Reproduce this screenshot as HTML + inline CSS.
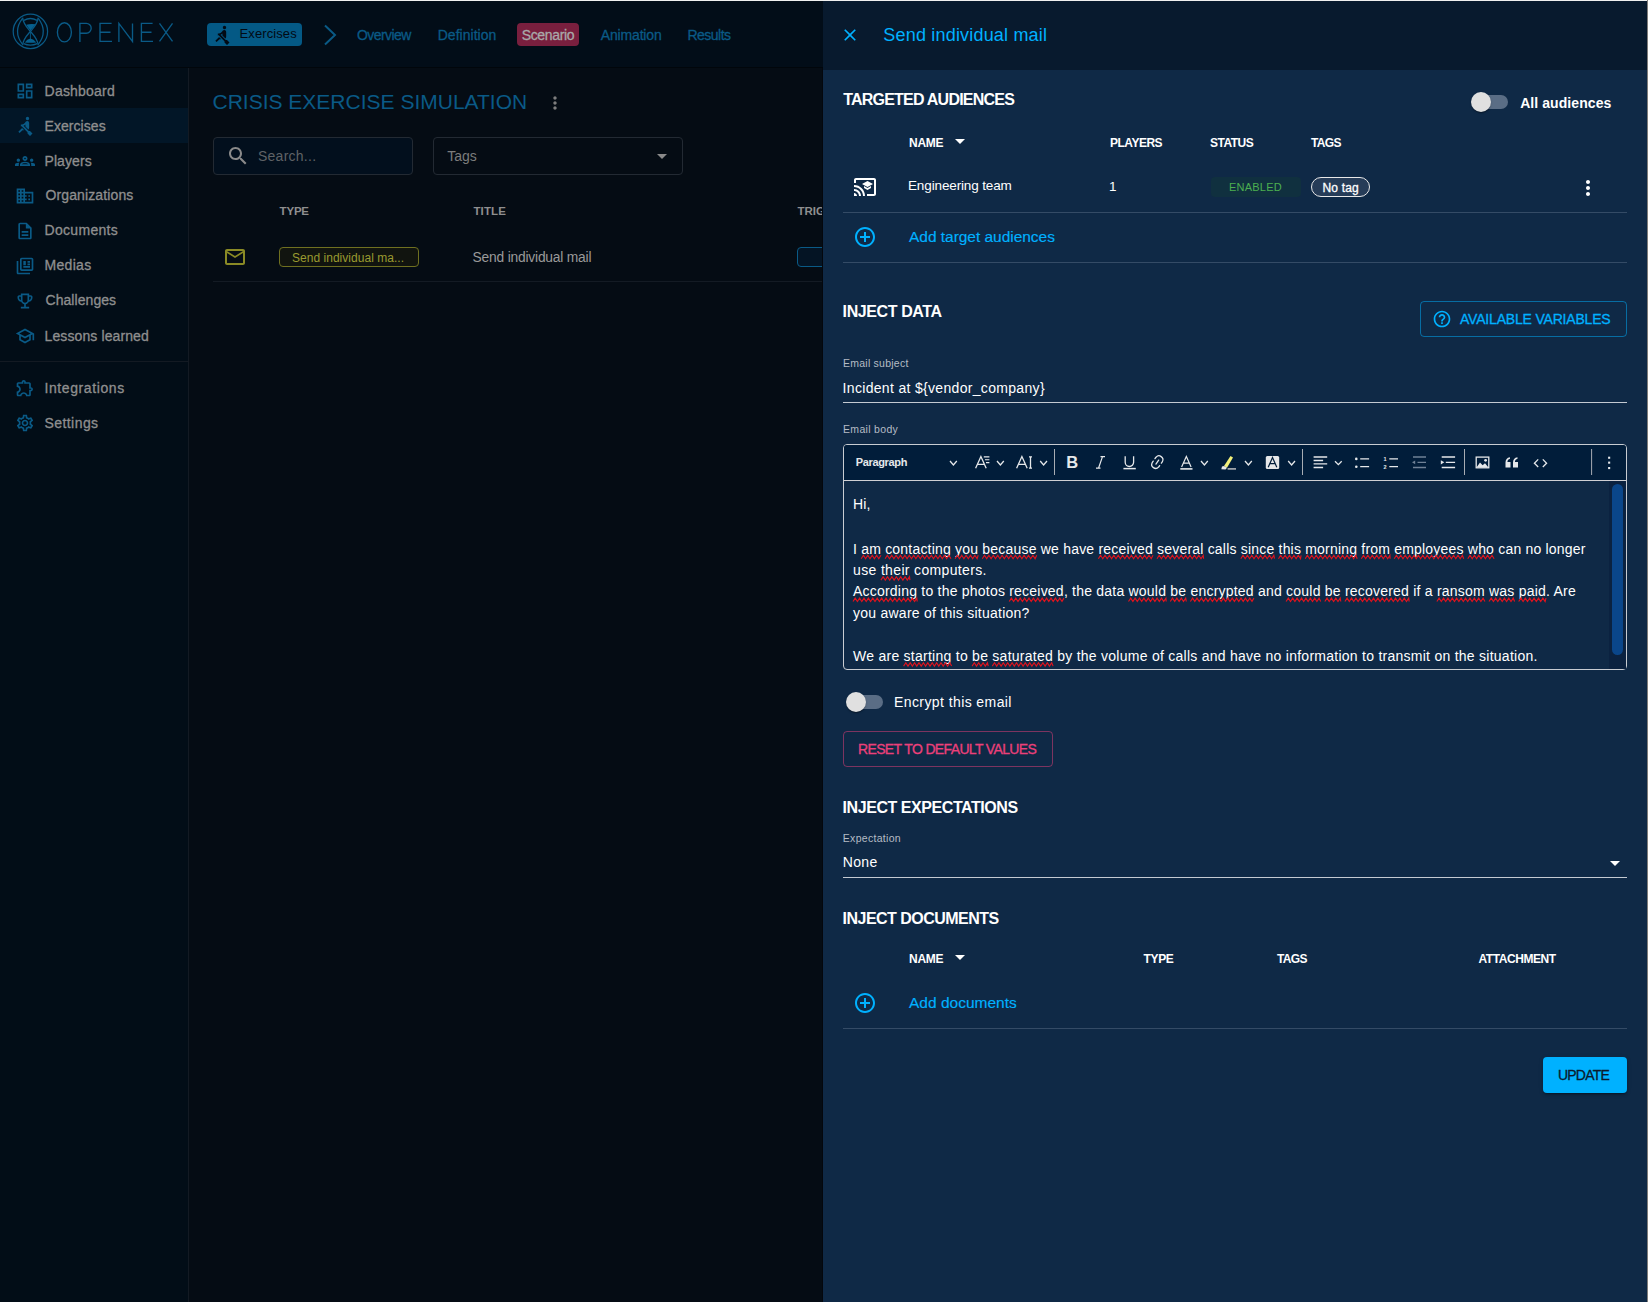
<!DOCTYPE html>
<html><head><meta charset="utf-8">
<style>
*{box-sizing:border-box;margin:0;padding:0}
html,body{width:1648px;height:1302px;overflow:hidden;background:#050c14;font-family:"Liberation Sans",sans-serif}
.a{position:absolute;white-space:nowrap}
.ed{font-size:14px;line-height:14px;color:#fff;letter-spacing:0.2px}
.sq{}
</style></head><body>
<div class="a" style="left:0px;top:0px;width:1648px;height:67px;background:#020d18"></div>
<div class="a" style="left:0px;top:67px;width:823px;height:1px;background:#01060b"></div>
<div class="a" style="left:0px;top:68px;width:188px;height:1234px;background:#020d17"></div>
<div class="a" style="left:188px;top:68px;width:1px;height:1234px;background:#131a23"></div>
<div class="a" style="left:189px;top:68px;width:634px;height:1234px;background:#050c14"></div>
<svg class="a" style="left:8px;top:8px" width="170" height="46" viewBox="0 0 170 46" fill="none" stroke="#0a5a86" stroke-width="1.25">
<circle cx="22.4" cy="23.4" r="17.2"/>
<path d="M14.5 10.4 Q4.5 23.4 14.5 36.4"/><path d="M30.3 10.4 Q40.3 23.4 30.3 36.4"/>
<path d="M14.6 9.6 C15.2 16 19.5 20 22.4 23.4 C25.3 26.8 29.6 30.8 30.2 37.2"/>
<path d="M30.2 9.6 C29.6 16 25.3 20 22.4 23.4 C19.5 26.8 15.2 30.8 14.6 37.2"/>
<path d="M15.9 12.4 Q22.4 8.6 29.0 12.4"/>
<path d="M15.6 35.6 Q22.4 38.6 29.2 35.6"/>
<path d="M18.2 16.8 Q22.4 15.4 27.6 16.2 L22.4 22.4 Z" fill="#06608f" stroke="none"/>
<path d="M22.4 24 V31" stroke-width="0.9"/>
<path d="M16.8 34.4 Q19 31 22.4 30.6 Q25.8 31 28.3 34.4 Q22.4 35.2 16.8 34.4 Z" fill="#06608f" stroke="none"/>
<g stroke-width="1.35" transform="translate(0 7)">
<ellipse cx="56.4" cy="17.3" rx="7.0" ry="9.6"/>
<path d="M71.9 27.1 V8.4 H78.3 A4.9 4.9 0 0 1 78.3 18.2 H71.9"/>
<path d="M103.6 8.4 H92 V26.4 H104 M92 17.2 H102.5"/>
<path d="M110.9 27.1 V8.4 L124.5 26.4 V8.4"/>
<path d="M144.6 8.4 H133.4 V26.4 H145 M133.4 17.2 H143.5"/>
<path d="M151.5 8.4 L164.5 26.4 M164.5 8.4 L151.5 26.4"/>
</g>
</svg>
<div class="a" style="left:207px;top:23px;width:95px;height:23px;border-radius:4px;background:#045985"></div>
<svg class="a" style="left:212px;top:25px" width="20" height="20" viewBox="0 0 24 24" fill="#020a14"><path d="M8.5 14.5 4 19l1.5 1.5L9 17h2l-2.5-2.5zM15 1c-1.1 0-2 .9-2 2s.9 2 2 2 2-.9 2-2-.9-2-2-2zm6 20.01L18 24l-2.99-3.01V19.5l-7.1-7.09c-.31.05-.61.07-.91.07v-2.160c1.66.03 3.61-.87 4.67-2.04l1.4-1.55c.19-.21.43-.38.69-.5.29-.14.62-.23.96-.23h.03C15.99 6.01 17 7.02 17 8.26v5.75c0 .84-.35 1.61-.92 2.16l-3.58-3.58v-2.27c-.63.52-1.43 1.02-2.29 1.39L16.5 18H18l3 3.01z"/></svg>
<div class="a" style="left:239.6px;top:27px;font-size:13px;line-height:13px;color:#020a14;letter-spacing:0.09px;">Exercises</div>
<svg class="a" style="left:322px;top:24px" width="16" height="22" viewBox="0 0 16 22" fill="none" stroke="#0a5a86" stroke-width="2"><path d="M3 1.5 L13 11 L3 20.5"/></svg>
<div class="a" style="left:357px;top:28.0px;font-size:14px;line-height:14px;color:#0a5a86;letter-spacing:-0.57px;-webkit-text-stroke:0.3px currentColor;">Overview</div>
<div class="a" style="left:437.7px;top:28.0px;font-size:14px;line-height:14px;color:#0a5a86;letter-spacing:0.03px;-webkit-text-stroke:0.3px currentColor;">Definition</div>
<div class="a" style="left:517px;top:23px;width:62px;height:23px;border-radius:4px;background:#791f3e"></div>
<div class="a" style="left:521.7px;top:28.0px;font-size:14px;line-height:14px;color:#a9a9a9;letter-spacing:-0.34px;-webkit-text-stroke:0.3px currentColor;">Scenario</div>
<div class="a" style="left:600.8px;top:28.0px;font-size:14px;line-height:14px;color:#0a5a86;letter-spacing:-0.17px;-webkit-text-stroke:0.3px currentColor;">Animation</div>
<div class="a" style="left:687.4px;top:28.0px;font-size:14px;line-height:14px;color:#0a5a86;letter-spacing:-0.5px;-webkit-text-stroke:0.3px currentColor;">Results</div>
<div class="a" style="left:0px;top:108px;width:188px;height:35px;background:#021627"></div>
<svg class="a" style="left:15px;top:81px" width="20" height="20" viewBox="0 0 24 24" fill="#0a5a86"><path d="M19 5v2h-4V5h4M9 5v6H5V5h4m10 8v6h-4v-6h4M9 17v2H5v-2h4M21 3h-8v6h8V3zM11 3H3v10h8V3zm10 8h-8v10h8V11zm-10 4H3v6h8v-6z"/></svg>
<div class="a" style="left:44.6px;top:84.2px;font-size:14px;line-height:14px;color:#8f8f8f;letter-spacing:0.21px;-webkit-text-stroke:0.3px currentColor;">Dashboard</div>
<svg class="a" style="left:15px;top:116px" width="20" height="20" viewBox="0 0 24 24" fill="#0a5a86"><path d="M8.5 14.5 4 19l1.5 1.5L9 17h2l-2.5-2.5zM15 1c-1.1 0-2 .9-2 2s.9 2 2 2 2-.9 2-2-.9-2-2-2zm6 20.01L18 24l-2.99-3.01V19.5l-7.1-7.09c-.31.05-.61.07-.91.07v-2.160c1.66.03 3.61-.87 4.67-2.04l1.4-1.55c.19-.21.43-.38.69-.5.29-.14.62-.23.96-.23h.03C15.99 6.01 17 7.02 17 8.26v5.75c0 .84-.35 1.61-.92 2.16l-3.58-3.58v-2.27c-.63.52-1.43 1.02-2.29 1.39L16.5 18H18l3 3.01z"/></svg>
<div class="a" style="left:44.5px;top:118.5px;font-size:14px;line-height:14px;color:#8f8f8f;letter-spacing:0.06px;-webkit-text-stroke:0.3px currentColor;">Exercises</div>
<svg class="a" style="left:15px;top:151px" width="20" height="20" viewBox="0 0 24 24" fill="#0a5a86"><path d="M4 13c1.1 0 2-.9 2-2s-.9-2-2-2-2 .9-2 2 .9 2 2 2zm1.13 1.1c-.37-.06-.74-.1-1.13-.1-.99 0-1.93.21-2.78.58C.48 14.9 0 15.62 0 16.43V18h4.5v-1.61c0-.83.23-1.61.63-2.29zM20 13c1.1 0 2-.9 2-2s-.9-2-2-2-2 .9-2 2 .9 2 2 2zm4 3.43c0-.81-.48-1.53-1.22-1.85-.85-.37-1.79-.58-2.78-.58-.39 0-.76.04-1.13.1.4.68.63 1.46.63 2.29V18H24v-1.57zm-7.76-2.78c-1.17-.52-2.61-.9-4.24-.9-1.63 0-3.07.39-4.24.9C6.68 14.13 6 15.21 6 16.39V18h12v-1.61c0-1.18-.68-2.26-1.76-2.74zM8.07 16c.09-.23.13-.39.91-.69.97-.38 1.99-.56 3.02-.56s2.05.18 3.02.56c.77.3.81.46.91.69H8.07zM12 8c.55 0 1 .45 1 1s-.45 1-1 1-1-.45-1-1 .45-1 1-1m0-2c-1.66 0-3 1.34-3 3s1.34 3 3 3 3-1.34 3-3-1.34-3-3-3z"/></svg>
<div class="a" style="left:44.5px;top:153.5px;font-size:14px;line-height:14px;color:#8f8f8f;letter-spacing:0.08px;-webkit-text-stroke:0.3px currentColor;">Players</div>
<svg class="a" style="left:15px;top:186px" width="20" height="20" viewBox="0 0 24 24" fill="#0a5a86"><path d="M12 7V3H2v18h20V7H12zM6 19H4v-2h2v2zm0-4H4v-2h2v2zm0-4H4V9h2v2zm0-4H4V5h2v2zm4 12H8v-2h2v2zm0-4H8v-2h2v2zm0-4H8V9h2v2zm0-4H8V5h2v2zm10 12h-8v-2h2v-2h-2v-2h2v-2h-2V9h8v10zm-2-8h-2v2h2v-2zm0 4h-2v2h2v-2z"/></svg>
<div class="a" style="left:45.5px;top:188.0px;font-size:14px;line-height:14px;color:#8f8f8f;letter-spacing:0.12px;-webkit-text-stroke:0.3px currentColor;">Organizations</div>
<svg class="a" style="left:15px;top:221px" width="20" height="20" viewBox="0 0 24 24" fill="#0a5a86"><path d="M8 16h8v2H8zm0-4h8v2H8zm6-10H6c-1.1 0-2 .9-2 2v16c0 1.1.89 2 1.99 2H18c1.1 0 2-.9 2-2V8l-6-6zm4 18H6V4h7v5h5v11z"/></svg>
<div class="a" style="left:44.5px;top:222.5px;font-size:14px;line-height:14px;color:#8f8f8f;letter-spacing:0.31px;-webkit-text-stroke:0.3px currentColor;">Documents</div>
<svg class="a" style="left:15px;top:256px" width="20" height="20" viewBox="0 0 24 24" fill="#0a5a86"><path d="M4 6H2v14c0 1.1.9 2 2 2h14v-2H4V6zm16-4H8c-1.1 0-2 .9-2 2v12c0 1.1.9 2 2 2h12c1.1 0 2-.9 2-2V4c0-1.1-.9-2-2-2zm0 14H8V4h12v12zM10 6h3v5h-3zm5 0h3v2h-3zm0 3h3v2h-3zm-5 3h8v2h-8z"/></svg>
<div class="a" style="left:44.5px;top:258.0px;font-size:14px;line-height:14px;color:#8f8f8f;letter-spacing:0.3px;-webkit-text-stroke:0.3px currentColor;">Medias</div>
<svg class="a" style="left:15px;top:291px" width="20" height="20" viewBox="0 0 24 24" fill="#0a5a86"><path d="M19 5h-2V3H7v2H5c-1.1 0-2 .9-2 2v1c0 2.55 1.92 4.63 4.39 4.94.63 1.5 1.98 2.63 3.61 2.96V19H7v2h10v-2h-4v-3.1c1.63-.33 2.98-1.46 3.61-2.96C19.08 12.63 21 10.55 21 8V7c0-1.1-.9-2-2-2zM5 8V7h2v3.82C5.84 10.4 5 9.3 5 8zm7 6c-1.65 0-3-1.35-3-3V5h6v6c0 1.65-1.35 3-3 3zm7-6c0 1.3-.84 2.4-2 2.82V7h2v1z"/></svg>
<div class="a" style="left:45.5px;top:293.0px;font-size:14px;line-height:14px;color:#8f8f8f;letter-spacing:0.06px;-webkit-text-stroke:0.3px currentColor;">Challenges</div>
<svg class="a" style="left:15px;top:326px" width="20" height="20" viewBox="0 0 24 24" fill="#0a5a86"><path d="M12 3 1 9l4 2.18v6L12 21l7-3.82v-6l2-1.09V17h2V9L12 3zm6.82 6L12 12.72 5.18 9 12 5.28 18.82 9zM17 15.99l-5 2.73-5-2.73v-3.72L12 15l5-2.73v3.72z"/></svg>
<div class="a" style="left:44.5px;top:328.5px;font-size:14px;line-height:14px;color:#8f8f8f;letter-spacing:0.11px;-webkit-text-stroke:0.3px currentColor;">Lessons learned</div>
<svg class="a" style="left:15px;top:378px" width="20" height="20" viewBox="0 0 24 24" fill="#0a5a86"><path d="M10.5 4.5c.28 0 .5.22.5.5v2h6v6h2c.28 0 .5.22.5.5s-.22.5-.5.5h-2v6h-2.12c-.68-1.75-2.39-3-4.38-3s-3.7 1.25-4.38 3H4v-2.12c1.75-.68 3-2.39 3-4.38 0-1.99-1.24-3.7-2.99-4.38L4 7h6V5c0-.28.22-.5.5-.5m0-2C9.12 2.5 8 3.62 8 5H4c-1.1 0-1.99.9-1.99 2v3.8h.29c1.49 0 2.7 1.21 2.7 2.7s-1.21 2.7-2.7 2.7H2V20c0 1.1.9 2 2 2h3.8v-.3c0-1.49 1.21-2.7 2.7-2.7s2.7 1.21 2.7 2.7v.3H17c1.1 0 2-.9 2-2v-4c1.38 0 2.5-1.12 2.5-2.5S20.38 11 19 11V7c0-1.1-.9-2-2-2h-4c0-1.38-1.12-2.5-2.5-2.5z"/></svg>
<div class="a" style="left:44.5px;top:381.0px;font-size:14px;line-height:14px;color:#8f8f8f;letter-spacing:0.59px;-webkit-text-stroke:0.3px currentColor;">Integrations</div>
<svg class="a" style="left:15px;top:413px" width="20" height="20" viewBox="0 0 24 24" fill="#0a5a86"><path d="M19.43 12.98c.04-.32.07-.64.07-.98 0-.34-.03-.66-.07-.98l2.11-1.65c.19-.15.24-.42.12-.64l-2-3.46c-.09-.16-.26-.25-.44-.25-.06 0-.12.01-.17.03l-2.49 1c-.52-.4-1.08-.73-1.69-.98l-.38-2.65C14.46 2.18 14.25 2 14 2h-4c-.25 0-.46.18-.49.42l-.38 2.65c-.61.25-1.17.59-1.69.98l-2.49-1c-.06-.02-.12-.03-.18-.03-.17 0-.34.09-.43.25l-2 3.46c-.13.22-.07.49.12.64l2.11 1.65c-.04.32-.07.65-.07.98 0 .33.03.66.07.98l-2.11 1.65c-.19.15-.24.42-.12.64l2 3.46c.09.16.26.25.44.25.06 0 .12-.01.17-.03l2.49-1c.52.4 1.08.73 1.69.98l.38 2.65c.03.24.24.42.49.42h4c.25 0 .46-.18.49-.42l.38-2.65c.61-.25 1.17-.59 1.69-.98l2.49 1c.06.02.12.03.18.03.17 0 .34-.09.43-.25l2-3.46c.12-.22.07-.49-.12-.64l-2.11-1.65zm-1.98-1.71c.04.31.05.52.05.73 0 .21-.02.43-.05.73l-.14 1.13.89.7 1.08.84-.7 1.21-1.27-.51-1.04-.42-.9.68c-.43.32-.84.56-1.25.73l-1.06.43-.16 1.13-.2 1.35h-1.4l-.19-1.35-.16-1.13-1.06-.43c-.43-.18-.83-.41-1.23-.71l-.91-.7-1.06.43-1.27.51-.7-1.21 1.08-.84.89-.7-.14-1.13c-.03-.31-.05-.54-.05-.74s.02-.43.05-.73l.14-1.13-.89-.7-1.08-.84.7-1.21 1.27.51 1.04.42.9-.68c.43-.32.84-.56 1.25-.73l1.06-.43.16-1.13.2-1.35h1.39l.19 1.35.16 1.13 1.06.43c.43.18.83.41 1.23.71l.91.7 1.06-.43 1.27-.51.7 1.21-1.07.85-.89.7.14 1.13zM12 8c-2.21 0-4 1.79-4 4s1.79 4 4 4 4-1.79 4-4-1.79-4-4-4zm0 6c-1.1 0-2-.9-2-2s.9-2 2-2 2 .9 2 2-.9 2-2 2z"/></svg>
<div class="a" style="left:44.5px;top:416.0px;font-size:14px;line-height:14px;color:#8f8f8f;letter-spacing:0.43px;-webkit-text-stroke:0.3px currentColor;">Settings</div>
<div class="a" style="left:0px;top:361px;width:188px;height:1px;background:#131a23"></div>
<div class="a" style="left:212.5px;top:91px;font-size:21px;line-height:21px;color:#0a5a86;">CRISIS EXERCISE SIMULATION</div>
<svg class="a" style="left:545px;top:93px" width="20" height="20" viewBox="0 0 24 24" fill="#7d7d7d"><path d="M12 8c1.1 0 2-.9 2-2s-.9-2-2-2-2 .9-2 2 .9 2 2 2zm0 2c-1.1 0-2 .9-2 2s.9 2 2 2 2-.9 2-2-.9-2-2-2zm0 6c-1.1 0-2 .9-2 2s.9 2 2 2 2-.9 2-2-.9-2-2-2z"/></svg>
<div class="a" style="left:213px;top:137px;width:200px;height:38px;border:1px solid #232a33;border-radius:4px;background:#020f1d"></div>
<svg class="a" style="left:226px;top:144px" width="24" height="24" viewBox="0 0 24 24" fill="#8a8a8a"><path d="M15.5 14h-.79l-.28-.27C15.41 12.59 16 11.11 16 9.5 16 5.91 13.09 3 9.5 3S3 5.91 3 9.5 5.91 16 9.5 16c1.61 0 3.09-.59 4.23-1.57l.27.28v.79l5 4.99L20.49 19l-4.99-5zm-6 0C7.01 14 5 11.99 5 9.5S7.01 5 9.5 5 14 7.01 14 9.5 11.99 14 9.5 14z"/></svg>
<div class="a" style="left:258px;top:149.2px;font-size:14px;line-height:14px;color:#5f6266;letter-spacing:0.25px;">Search...</div>
<div class="a" style="left:433px;top:137px;width:250px;height:38px;border:1px solid #232a33;border-radius:4px"></div>
<div class="a" style="left:447.3px;top:148.5px;font-size:14px;line-height:14px;color:#7c7c7c;">Tags</div>
<svg class="a" style="left:650px;top:144px" width="24" height="24" viewBox="0 0 24 24" fill="#8a8a8a"><path d="M7 10l5 5 5-5z"/></svg>
<div class="a" style="left:279.6px;top:206.2px;font-size:11.5px;line-height:11.5px;color:#8f8f8f;font-weight:700;letter-spacing:-0.2px;">TYPE</div>
<div class="a" style="left:473.4px;top:206.2px;font-size:11.5px;line-height:11.5px;color:#8f8f8f;font-weight:700;letter-spacing:0.15px;">TITLE</div>
<div class="a" style="left:797.5px;top:206.2px;font-size:11.5px;line-height:11.5px;color:#8f8f8f;font-weight:700;">TRIGGER</div>
<svg class="a" style="left:223px;top:245px" width="24" height="24" viewBox="0 0 24 24" fill="#8a8a25"><path d="M22 6c0-1.1-.9-2-2-2H4c-1.1 0-2 .9-2 2v12c0 1.1.9 2 2 2h16c1.1 0 2-.9 2-2V6zm-2 0-8 5-8-5h16zm0 12H4V8l8 5 8-5v10z"/></svg>
<div class="a" style="left:279px;top:247px;width:140px;height:20px;border:1px solid #6f7020;border-radius:4px;background:#11140f"></div>
<div class="a" style="left:292px;top:251.5px;font-size:12px;line-height:12px;color:#9a9a30;letter-spacing:0.03px;">Send individual ma...</div>
<div class="a" style="left:472.6px;top:250.8px;font-size:13.8px;line-height:13.8px;color:#9a9a9a;letter-spacing:-0.2px;">Send individual mail</div>
<div class="a" style="left:797px;top:247px;width:60px;height:20px;border:1px solid #0a5a86;border-radius:4px;background:#041424"></div>
<div class="a" style="left:213px;top:281px;width:610px;height:1px;background:#141b24"></div>
<div class="a" style="left:822px;top:68px;width:1px;height:1234px;background:#04070d"></div>
<div class="a" style="left:823px;top:0px;width:825px;height:1302px;background:#0f2946"></div>
<div class="a" style="left:823px;top:0px;width:825px;height:70px;background:#081a2e"></div>
<svg class="a" style="left:840px;top:25px" width="20" height="20" viewBox="0 0 24 24" fill="#00b1ff"><path d="M19 6.41 17.59 5 12 10.59 6.41 5 5 6.41 10.59 12 5 17.59 6.41 19 12 13.41 17.59 19 19 17.59 13.41 12z"/></svg>
<div class="a" style="left:883.3px;top:25.7px;font-size:18px;line-height:18px;color:#00b1ff;letter-spacing:0.19px;">Send individual mail</div>
<div class="a" style="left:843.2px;top:92.3px;font-size:16px;line-height:16px;color:#fff;font-weight:700;letter-spacing:-0.78px;">TARGETED AUDIENCES</div>
<div class="a" style="left:1474px;top:95px;width:34px;height:14px;border-radius:7px;background:#5a6d85"></div>
<div class="a" style="left:1471px;top:92px;width:20px;height:20px;border-radius:10px;background:#e0e0e0;box-shadow:0 2px 1px -1px rgba(0,0,0,.2),0 1px 1px 0 rgba(0,0,0,.14),0 1px 3px 0 rgba(0,0,0,.12)"></div>
<div class="a" style="left:1520.2px;top:95.7px;font-size:14px;line-height:14px;color:#fff;font-weight:700;letter-spacing:0.07px;">All audiences</div>
<div class="a" style="left:909.1px;top:137.2px;font-size:12px;line-height:12px;color:#fff;font-weight:700;letter-spacing:-0.33px;">NAME</div>
<svg class="a" style="left:948px;top:129px" width="24" height="24" viewBox="0 0 24 24" fill="#fff"><path d="M7 10l5 5 5-5z"/></svg>
<div class="a" style="left:1110px;top:137.2px;font-size:12px;line-height:12px;color:#fff;font-weight:700;letter-spacing:-0.5px;">PLAYERS</div>
<div class="a" style="left:1210px;top:137.2px;font-size:12px;line-height:12px;color:#fff;font-weight:700;letter-spacing:-0.5px;">STATUS</div>
<div class="a" style="left:1311px;top:137.2px;font-size:12px;line-height:12px;color:#fff;font-weight:700;letter-spacing:-0.67px;">TAGS</div>
<svg class="a" style="left:853px;top:175px" width="24" height="24" viewBox="0 0 24 24" fill="#fff"><path d="M21 3H3c-1.1 0-2 .9-2 2v3h2V5h18v14h-7v2h7c1.1 0 2-.9 2-2V5c0-1.1-.9-2-2-2zM1 18v3h3c0-1.66-1.34-3-3-3zm0-4v2c2.76 0 5 2.24 5 5h2c0-3.87-3.13-7-7-7zm0-4v2c4.97 0 9 4.03 9 9h2c0-6.08-4.93-11-11-11zm10 1.09v2L14.5 15l3.5-1.91v-2L14.5 13 11 11.09zM14.5 6 9 9l5.5 3L20 9l-5.5-3z"/></svg>
<div class="a" style="left:908px;top:178.5px;font-size:13.5px;line-height:13.5px;color:#fff;letter-spacing:-0.13px;">Engineering team</div>
<div class="a" style="left:1109px;top:179.5px;font-size:13.5px;line-height:13.5px;color:#fff;">1</div>
<div class="a" style="left:1211px;top:177px;width:90px;height:20px;border-radius:4px;background:#10303f"></div>
<div class="a" style="left:1229px;top:182.1px;font-size:11px;line-height:11px;color:#4caf50;letter-spacing:0.23px;">ENABLED</div>
<div class="a" style="left:1311px;top:177px;width:59px;height:20px;border-radius:10px;border:1px solid #e8e8e8;background:#263c58"></div>
<div class="a" style="left:1322.4px;top:182px;font-size:12px;line-height:12px;color:#fff;letter-spacing:0.2px;-webkit-text-stroke:0.3px currentColor;">No tag</div>
<svg class="a" style="left:1576px;top:176px" width="24" height="24" viewBox="0 0 24 24" fill="#fff"><path d="M12 8c1.1 0 2-.9 2-2s-.9-2-2-2-2 .9-2 2 .9 2 2 2zm0 2c-1.1 0-2 .9-2 2s.9 2 2 2 2-.9 2-2-.9-2-2-2zm0 6c-1.1 0-2 .9-2 2s.9 2 2 2 2-.9 2-2-.9-2-2-2z"/></svg>
<div class="a" style="left:843px;top:212px;width:784px;height:1px;background:#344b66"></div>
<svg class="a" style="left:853px;top:225px" width="24" height="24" viewBox="0 0 24 24" fill="#00b1ff"><path d="M13 7h-2v4H7v2h4v4h2v-4h4v-2h-4V7zm-1-5C6.48 2 2 6.48 2 12s4.48 10 10 10 10-4.48 10-10S17.52 2 12 2zm0 18c-4.41 0-8-3.59-8-8s3.59-8 8-8 8 3.59 8 8-3.59 8-8 8z"/></svg>
<div class="a" style="left:909px;top:228.5px;font-size:15.5px;line-height:15.5px;color:#00b1ff;letter-spacing:-0.03px;-webkit-text-stroke:0.15px currentColor;">Add target audiences</div>
<div class="a" style="left:843px;top:262px;width:784px;height:1px;background:#344b66"></div>
<div class="a" style="left:842.6px;top:304px;font-size:16px;line-height:16px;color:#fff;font-weight:700;letter-spacing:-0.4px;">INJECT DATA</div>
<div class="a" style="left:1420px;top:301px;width:207px;height:36px;border-radius:4px;border:1px solid rgba(0,177,255,0.5)"></div>
<svg class="a" style="left:1432px;top:309px" width="20" height="20" viewBox="0 0 24 24" fill="#00b1ff"><path d="M11 18h2v-2h-2v2zm1-16C6.48 2 2 6.48 2 12s4.48 10 10 10 10-4.48 10-10S17.52 2 12 2zm0 18c-4.41 0-8-3.59-8-8s3.59-8 8-8 8 3.59 8 8-3.59 8-8 8zm0-14c-2.21 0-4 1.79-4 4h2c0-1.1.9-2 2-2s2 .9 2 2c0 2-3 1.75-3 5h2c0-2.25 3-2.5 3-5 0-2.21-1.79-4-4-4z"/></svg>
<div class="a" style="left:1460px;top:312px;font-size:14px;line-height:14px;color:#00b1ff;letter-spacing:-0.19px;-webkit-text-stroke:0.3px currentColor;">AVAILABLE VARIABLES</div>
<div class="a" style="left:843px;top:357.9px;font-size:10.5px;line-height:10.5px;color:#b5bcc5;letter-spacing:0.24px;">Email subject</div>
<div class="a" style="left:842.6px;top:380.8px;font-size:14px;line-height:14px;color:#fff;letter-spacing:0.32px;">Incident at ${vendor_company}</div>
<div class="a" style="left:843px;top:402px;width:784px;height:1px;background:#c4cad2"></div>
<div class="a" style="left:843px;top:424.3px;font-size:10.5px;line-height:10.5px;color:#b5bcc5;letter-spacing:0.32px;">Email body</div>
<div class="a" style="left:843px;top:444px;width:784px;height:226px;border:1px solid #c8ccd2;border-radius:4px;overflow:hidden;background:#0f2946"><div style="position:absolute;left:0;top:0;width:782px;height:36px;background:#011d3a;border-bottom:1px solid #d0d0d4"></div></div>
<div class="a" style="left:855.7px;top:456.6px;font-size:11px;line-height:11px;color:#e6e8ea;font-weight:700;letter-spacing:-0.34px;">Paragraph</div>
<svg class="a" style="left:843px;top:444px" width="784" height="37" viewBox="843 444 784 37"><path d="M950 461 L953.40 465 L956.8 461" fill="none" stroke="#e6e8ea" stroke-width="1.3"/><path d="M975.6 468.3 L980.9 456.6 L986.2 468.3 M977.4 464.3 H984.4" fill="none" stroke="#e6e8ea" stroke-width="1.3"/><path d="M983.8 456.9 H989.4 M985 459.8 H989.4 M986 462.6 H989.4" fill="none" stroke="#e6e8ea" stroke-width="1.1"/><path d="M997 461 L1000.40 465 L1003.8 461" fill="none" stroke="#e6e8ea" stroke-width="1.3"/><path d="M1016.6 468.3 L1021.9 456.6 L1027.2 468.3 M1018.4 464.3 H1025.4" fill="none" stroke="#e6e8ea" stroke-width="1.3"/><path d="M1030.5 457 V468 M1029 456.8 H1032 M1029 468.2 H1032" fill="none" stroke="#e6e8ea" stroke-width="1.3"/><path d="M1040.2 461 L1043.60 465 L1047 461" fill="none" stroke="#e6e8ea" stroke-width="1.3"/><path d="M1054.5 449 V475" stroke="#a8adb4" stroke-width="1"/><text x="1066.2" y="468.3" font-family="Liberation Sans" font-weight="700" font-size="16.5" fill="#e6e8ea">B</text><path d="M1098.5 468.2 L1102.5 456.6 M1096 468.2 H1100.5 M1100.5 456.6 H1105" fill="none" stroke="#e6e8ea" stroke-width="1.2"/><path d="M1125.2 456.3 V462.3 A4.2 4.2 0 0 0 1133.6 462.3 V456.3" fill="none" stroke="#e6e8ea" stroke-width="1.3"/><path d="M1123.4 468.6 H1135.8" stroke="#e6e8ea" stroke-width="1.5"/><g transform="translate(1148.6 453.4) scale(0.87)" fill="#e6e8ea"><path d="m11.077 15 .991-1.416a.75.75 0 1 1 1.229.86l-1.148 1.64a.748.748 0 0 1-.217.206 5.251 5.251 0 0 1-8.503-5.955.741.741 0 0 1 .12-.274l1.147-1.639a.75.75 0 1 1 1.228.86L4.933 10.7l.006.003a3.75 3.75 0 0 0 6.132 4.294l.006.004zm5.494-5.335a.748.748 0 0 1-.12.274l-1.147 1.639a.75.75 0 1 1-1.228-.86l.86-1.23a3.75 3.75 0 0 0-6.144-4.301l-.86 1.229a.75.75 0 0 1-1.229-.86l1.148-1.64a.748.748 0 0 1 .217-.206 5.251 5.251 0 0 1 8.503 5.955zm-4.563-2.532a.75.75 0 0 1 .184 1.045l-3.155 4.505a.75.75 0 1 1-1.229-.86l3.155-4.506a.75.75 0 0 1 1.045-.184z"/></g><path d="M1181.6 467 L1186.35 456.4 L1191.1 467 M1183.3 463.2 H1189.4" fill="none" stroke="#e6e8ea" stroke-width="1.2"/><path d="M1180.3 468.9 H1192.5" stroke="#e6e8ea" stroke-width="1.6"/><path d="M1201 461 L1204.40 465 L1207.8 461" fill="none" stroke="#e6e8ea" stroke-width="1.3"/><path d="M1224 466 L1230.5 456 L1233 457.6 L1227 467.8 Z" fill="#f2f07a"/><path d="M1222 466.5 L1224 466 L1227 467.8 L1225.5 469.5 L1221.3 469.3 Z" fill="#e8e8e8"/><path d="M1227.6 468.9 H1236" stroke="#b0b4b8" stroke-width="1.6"/><path d="M1245 461 L1248.40 465 L1251.8 461" fill="none" stroke="#e6e8ea" stroke-width="1.3"/><rect x="1265.8" y="455.9" width="13.4" height="13.2" rx="1.5" fill="#e6e8ea"/><path d="M1268.2 467.3 L1272.5 457.6 L1276.8 467.3 M1269.7 463.6 H1275.3" fill="none" stroke="#011d3a" stroke-width="1.2"/><path d="M1288.2 461 L1291.60 465 L1295 461" fill="none" stroke="#e6e8ea" stroke-width="1.3"/><path d="M1302.5 449 V475" stroke="#a8adb4" stroke-width="1"/><path d="M1313.6 457 H1327.2 M1313.6 460.5 H1323.1 M1313.6 463.9 H1327.2 M1313.6 467.5 H1323.1" stroke="#e6e8ea" stroke-width="1.3"/><path d="M1335 461.2 L1338.35 464.6 L1341.7 461.2" fill="none" stroke="#e6e8ea" stroke-width="1.3"/><circle cx="1356.3" cy="458.9" r="1.3" fill="#e6e8ea"/><circle cx="1356.3" cy="466.7" r="1.3" fill="#e6e8ea"/><path d="M1360.2 458.9 H1369.1 M1360.2 466.7 H1369.1" stroke="#e6e8ea" stroke-width="1.3"/><text x="1383.6" y="461" font-family="Liberation Sans" font-weight="700" font-size="5.5" fill="#e6e8ea">1</text><text x="1383.4" y="469.2" font-family="Liberation Sans" font-weight="700" font-size="5.5" fill="#e6e8ea">2</text><path d="M1389.3 458.9 H1398 M1389.3 466.7 H1398" stroke="#e6e8ea" stroke-width="1.3"/><path d="M1413 457 H1426 M1417.5 462.3 H1426 M1413 467.5 H1426" stroke="#6f8196" stroke-width="1.3"/><path d="M1415.2 460.4 L1412 462.3 L1415.2 464.2 Z" fill="#6f8196"/><path d="M1441.7 457 H1455.1 M1445.8 462.3 H1455.1 M1441.7 467.5 H1455.1" stroke="#e6e8ea" stroke-width="1.3"/><path d="M1440.8 460.2 L1444.3 462.3 L1440.8 464.4 Z" fill="#e6e8ea"/><path d="M1464.5 449 V475" stroke="#a8adb4" stroke-width="1"/><rect x="1476.2" y="457.1" width="12.6" height="10.7" fill="none" stroke="#e6e8ea" stroke-width="1.3"/><path d="M1476.5 467.5 L1480 462.6 L1482.6 465.2 L1485 463.2 L1488.5 467.5 Z" fill="#e6e8ea"/><circle cx="1485.6" cy="460.3" r="1.4" fill="#e6e8ea"/><path d="M1505.5 462.5 C1505.5 459.5 1507 457.6 1510 457.2 L1510 458.8 C1508.5 459.2 1507.5 460.3 1507.4 462 L1510.5 462 L1510.5 467.5 L1505.5 467.5 Z" fill="#e6e8ea"/><path d="M1513 462.5 C1513 459.5 1514.5 457.6 1517.5 457.2 L1517.5 458.8 C1516 459.2 1515 460.3 1514.9 462 L1518 462 L1518 467.5 L1513 467.5 Z" fill="#e6e8ea"/><path d="M1538.2 459.4 L1534.4 463.2 L1538.2 467 M1542.8 459.4 L1546.6 463.2 L1542.8 467" fill="none" stroke="#e6e8ea" stroke-width="1.3"/><path d="M1591.6 449 V475" stroke="#a8adb4" stroke-width="1"/><rect x="1608.1" y="456.7" width="2.1" height="2.1" fill="#e6e8ea"/><rect x="1608.1" y="461.6" width="2.1" height="2.1" fill="#e6e8ea"/><rect x="1608.1" y="467" width="2.1" height="2.1" fill="#e6e8ea"/></svg>
<div class="a" style="left:1609px;top:481px;width:17px;height:188px;background:#0b2240"></div>
<div class="a" style="left:1612px;top:484px;width:11px;height:171px;border-radius:6px;background:#0a468a"></div>
<div class="a ed" style="left:853px;top:497.3px;letter-spacing:0.2px">Hi,</div>
<div class="a ed" style="left:853px;top:541.5px;letter-spacing:0.2px">I <span class="sq">am</span> <span class="sq">contacting</span> <span class="sq">you</span> <span class="sq">because</span> we have <span class="sq">received</span> <span class="sq">several</span> calls <span class="sq">since</span> <span class="sq">this</span> <span class="sq">morning</span> <span class="sq">from</span> <span class="sq">employees</span> <span class="sq">who</span> can no longer</div>
<div class="a ed" style="left:853px;top:562.9px;letter-spacing:0.35px">use <span class="sq">their</span> computers.</div>
<div class="a ed" style="left:853px;top:584.3px;letter-spacing:0.217px"><span class="sq">According</span> to the photos <span class="sq">received</span>, the data <span class="sq">would</span> <span class="sq">be</span> <span class="sq">encrypted</span> and <span class="sq">could</span> <span class="sq">be</span> <span class="sq">recovered</span> if a <span class="sq">ransom</span> <span class="sq">was</span> <span class="sq">paid</span>. Are</div>
<div class="a ed" style="left:853px;top:605.8px;letter-spacing:0.25px">you aware of this situation?</div>
<div class="a ed" style="left:853px;top:648.9px;letter-spacing:0.26px">We are <span class="sq">starting</span> to <span class="sq">be</span> <span class="sq">saturated</span> by the volume of calls and have no information to transmit on the situation.</div>
<div class="a" style="left:849px;top:695px;width:34px;height:14px;border-radius:7px;background:#5a6d85"></div>
<div class="a" style="left:846px;top:692px;width:20px;height:20px;border-radius:10px;background:#e0e0e0;box-shadow:0 2px 1px -1px rgba(0,0,0,.2),0 1px 1px 0 rgba(0,0,0,.14),0 1px 3px 0 rgba(0,0,0,.12)"></div>
<div class="a" style="left:894px;top:695px;font-size:14px;line-height:14px;color:#fff;letter-spacing:0.41px;">Encrypt this email</div>
<div class="a" style="left:843px;top:731px;width:210px;height:36px;border-radius:4px;border:1px solid rgba(236,64,122,0.5)"></div>
<div class="a" style="left:858px;top:741.8px;font-size:14px;line-height:14px;color:#ec407a;letter-spacing:-0.64px;-webkit-text-stroke:0.3px currentColor;">RESET TO DEFAULT VALUES</div>
<div class="a" style="left:842.6px;top:799.5px;font-size:16px;line-height:16px;color:#fff;font-weight:700;letter-spacing:-0.44px;">INJECT EXPECTATIONS</div>
<div class="a" style="left:842.8px;top:833px;font-size:10.5px;line-height:10.5px;color:#b5bcc5;letter-spacing:0.3px;">Expectation</div>
<div class="a" style="left:842.7px;top:855px;font-size:14px;line-height:14px;color:#fff;letter-spacing:0.35px;">None</div>
<div class="a" style="left:843px;top:877px;width:784px;height:1px;background:#c4cad2"></div>
<svg class="a" style="left:1603px;top:851px" width="24" height="24" viewBox="0 0 24 24" fill="#fff"><path d="M7 10l5 5 5-5z"/></svg>
<div class="a" style="left:842.6px;top:911px;font-size:16px;line-height:16px;color:#fff;font-weight:700;letter-spacing:-0.53px;">INJECT DOCUMENTS</div>
<div class="a" style="left:909.1px;top:953.3px;font-size:12px;line-height:12px;color:#fff;font-weight:700;letter-spacing:-0.33px;">NAME</div>
<svg class="a" style="left:948px;top:945px" width="24" height="24" viewBox="0 0 24 24" fill="#fff"><path d="M7 10l5 5 5-5z"/></svg>
<div class="a" style="left:1143.5px;top:953.3px;font-size:12px;line-height:12px;color:#fff;font-weight:700;letter-spacing:-0.33px;">TYPE</div>
<div class="a" style="left:1277px;top:953.3px;font-size:12px;line-height:12px;color:#fff;font-weight:700;letter-spacing:-0.67px;">TAGS</div>
<div class="a" style="left:1478.5px;top:953.3px;font-size:12px;line-height:12px;color:#fff;font-weight:700;letter-spacing:-0.44px;">ATTACHMENT</div>
<svg class="a" style="left:853px;top:991px" width="24" height="24" viewBox="0 0 24 24" fill="#00b1ff"><path d="M13 7h-2v4H7v2h4v4h2v-4h4v-2h-4V7zm-1-5C6.48 2 2 6.48 2 12s4.48 10 10 10 10-4.48 10-10S17.52 2 12 2zm0 18c-4.41 0-8-3.59-8-8s3.59-8 8-8 8 3.59 8 8-3.59 8-8 8z"/></svg>
<div class="a" style="left:909px;top:995px;font-size:15.5px;line-height:15.5px;color:#00b1ff;-webkit-text-stroke:0.15px currentColor;">Add documents</div>
<div class="a" style="left:843px;top:1028px;width:784px;height:1px;background:#344b66"></div>
<div class="a" style="left:1543px;top:1057px;width:84px;height:36px;border-radius:4px;background:#00b1ff;box-shadow:0 3px 1px -2px rgba(0,0,0,.2),0 2px 2px 0 rgba(0,0,0,.14),0 1px 5px 0 rgba(0,0,0,.12)"></div>
<div class="a" style="left:1558px;top:1067.5px;font-size:14px;line-height:14px;color:#0b1a2c;letter-spacing:-0.8px;-webkit-text-stroke:0.3px currentColor;">UPDATE</div>
<div class="a" style="left:0px;top:0px;width:1648px;height:1px;background:#f0f0f0"></div>
<div class="a" style="left:1647px;top:0px;width:1px;height:1302px;background:#807d7a"></div>
<svg class="a" style="left:0;top:0" width="1648" height="1302" viewBox="0 0 1648 1302"><path d="M861.2,558.7 L863.4,555.3 L865.6,558.7 L867.8,555.3 L870.0,558.7 L872.2,555.3 L874.4,558.7 L876.6,555.3 L878.8,558.7 L881.0,555.3 M885.1,558.7 L887.3,555.3 L889.5,558.7 L891.7,555.3 L893.9,558.7 L896.1,555.3 L898.3,558.7 L900.5,555.3 L902.7,558.7 L904.9,555.3 L907.1,558.7 L909.3,555.3 L911.5,558.7 L913.7,555.3 L915.9,558.7 L918.1,555.3 L920.3,558.7 L922.5,555.3 L924.7,558.7 L926.9,555.3 L929.1,558.7 L931.3,555.3 L933.5,558.7 L935.7,555.3 L937.9,558.7 L940.1,555.3 L942.3,558.7 L944.5,555.3 L946.7,558.7 L948.9,555.3 L951.0,558.7 M955.1,558.7 L957.3,555.3 L959.5,558.7 L961.7,555.3 L963.9,558.7 L966.1,555.3 L968.3,558.7 L970.5,555.3 L972.7,558.7 L974.9,555.3 L977.1,558.7 L978.2,555.3 M982.3,558.7 L984.5,555.3 L986.7,558.7 L988.9,555.3 L991.1,558.7 L993.3,555.3 L995.5,558.7 L997.7,555.3 L999.9,558.7 L1002.1,555.3 L1004.3,558.7 L1006.5,555.3 L1008.7,558.7 L1010.9,555.3 L1013.1,558.7 L1015.3,555.3 L1017.5,558.7 L1019.7,555.3 L1021.9,558.7 L1024.1,555.3 L1026.3,558.7 L1028.5,555.3 L1030.7,558.7 L1032.9,555.3 L1035.1,558.7 L1036.7,555.3 M1098.4,558.7 L1100.6,555.3 L1102.8,558.7 L1105.0,555.3 L1107.2,558.7 L1109.4,555.3 L1111.6,558.7 L1113.8,555.3 L1116.0,558.7 L1118.2,555.3 L1120.4,558.7 L1122.6,555.3 L1124.8,558.7 L1127.0,555.3 L1129.2,558.7 L1131.4,555.3 L1133.6,558.7 L1135.8,555.3 L1138.0,558.7 L1140.2,555.3 L1142.4,558.7 L1144.6,555.3 L1146.8,558.7 L1149.0,555.3 L1151.2,558.7 L1153.0,555.3 M1157.0,558.7 L1159.2,555.3 L1161.4,558.7 L1163.6,555.3 L1165.8,558.7 L1168.0,555.3 L1170.2,558.7 L1172.4,555.3 L1174.6,558.7 L1176.8,555.3 L1179.0,558.7 L1181.2,555.3 L1183.4,558.7 L1185.6,555.3 L1187.8,558.7 L1190.0,555.3 L1192.2,558.7 L1194.4,555.3 L1196.6,558.7 L1198.8,555.3 L1201.0,558.7 L1203.2,555.3 L1203.6,558.7 M1240.8,558.7 L1243.0,555.3 L1245.2,558.7 L1247.4,555.3 L1249.6,558.7 L1251.8,555.3 L1254.0,558.7 L1256.2,555.3 L1258.4,558.7 L1260.6,555.3 L1262.8,558.7 L1265.0,555.3 L1267.2,558.7 L1269.4,555.3 L1271.6,558.7 L1273.8,555.3 L1274.5,558.7 M1278.5,558.7 L1280.7,555.3 L1282.9,558.7 L1285.1,555.3 L1287.3,558.7 L1289.5,555.3 L1291.7,558.7 L1293.9,555.3 L1296.1,558.7 L1298.3,555.3 L1300.5,558.7 L1301.1,555.3 M1305.2,558.7 L1307.4,555.3 L1309.6,558.7 L1311.8,555.3 L1314.0,558.7 L1316.2,555.3 L1318.4,558.7 L1320.6,555.3 L1322.8,558.7 L1325.0,555.3 L1327.2,558.7 L1329.4,555.3 L1331.6,558.7 L1333.8,555.3 L1336.0,558.7 L1338.2,555.3 L1340.4,558.7 L1342.6,555.3 L1344.8,558.7 L1347.0,555.3 L1349.2,558.7 L1351.4,555.3 L1353.6,558.7 L1355.8,555.3 L1357.2,558.7 M1361.3,558.7 L1363.5,555.3 L1365.7,558.7 L1367.9,555.3 L1370.1,558.7 L1372.3,555.3 L1374.5,558.7 L1376.7,555.3 L1378.9,558.7 L1381.1,555.3 L1383.3,558.7 L1385.5,555.3 L1387.7,558.7 L1389.9,555.3 L1390.1,558.7 M1394.2,558.7 L1396.4,555.3 L1398.6,558.7 L1400.8,555.3 L1403.0,558.7 L1405.2,555.3 L1407.4,558.7 L1409.6,555.3 L1411.8,558.7 L1414.0,555.3 L1416.2,558.7 L1418.4,555.3 L1420.6,558.7 L1422.8,555.3 L1425.0,558.7 L1427.2,555.3 L1429.4,558.7 L1431.6,555.3 L1433.8,558.7 L1436.0,555.3 L1438.2,558.7 L1440.4,555.3 L1442.6,558.7 L1444.8,555.3 L1447.0,558.7 L1449.2,555.3 L1451.4,558.7 L1453.6,555.3 L1455.8,558.7 L1458.0,555.3 L1460.2,558.7 L1462.4,555.3 L1463.7,558.7 M1467.8,558.7 L1470.0,555.3 L1472.2,558.7 L1474.4,555.3 L1476.6,558.7 L1478.8,555.3 L1481.0,558.7 L1483.2,555.3 L1485.4,558.7 L1487.6,555.3 L1489.8,558.7 L1492.0,555.3 L1494.1,558.7 M880.9,580.1 L883.1,576.7 L885.3,580.1 L887.5,576.7 L889.7,580.1 L891.9,576.7 L894.1,580.1 L896.3,576.7 L898.5,580.1 L900.7,576.7 L902.9,580.1 L905.1,576.7 L907.3,580.1 L909.5,576.7 L909.9,580.1 M853.0,601.5 L855.2,598.1 L857.4,601.5 L859.6,598.1 L861.8,601.5 L864.0,598.1 L866.2,601.5 L868.4,598.1 L870.6,601.5 L872.8,598.1 L875.0,601.5 L877.2,598.1 L879.4,601.5 L881.6,598.1 L883.8,601.5 L886.0,598.1 L888.2,601.5 L890.4,598.1 L892.6,601.5 L894.8,598.1 L897.0,601.5 L899.2,598.1 L901.4,601.5 L903.6,598.1 L905.8,601.5 L908.0,598.1 L910.2,601.5 L912.4,598.1 L914.6,601.5 L916.8,598.1 L917.2,601.5 M1009.2,601.5 L1011.4,598.1 L1013.6,601.5 L1015.8,598.1 L1018.0,601.5 L1020.2,598.1 L1022.4,601.5 L1024.6,598.1 L1026.8,601.5 L1029.0,598.1 L1031.2,601.5 L1033.4,598.1 L1035.6,601.5 L1037.8,598.1 L1040.0,601.5 L1042.2,598.1 L1044.4,601.5 L1046.6,598.1 L1048.8,601.5 L1051.0,598.1 L1053.2,601.5 L1055.4,598.1 L1057.6,601.5 L1059.8,598.1 L1062.0,601.5 L1063.9,598.1 M1128.5,601.5 L1130.7,598.1 L1132.9,601.5 L1135.1,598.1 L1137.3,601.5 L1139.5,598.1 L1141.7,601.5 L1143.9,598.1 L1146.1,601.5 L1148.3,598.1 L1150.5,601.5 L1152.7,598.1 L1154.9,601.5 L1157.1,598.1 L1159.3,601.5 L1161.5,598.1 L1163.7,601.5 L1165.9,598.1 L1166.2,601.5 M1170.3,601.5 L1172.5,598.1 L1174.7,601.5 L1176.9,598.1 L1179.1,601.5 L1181.3,598.1 L1183.5,601.5 L1185.7,598.1 L1186.3,601.5 M1190.4,601.5 L1192.6,598.1 L1194.8,601.5 L1197.0,598.1 L1199.2,601.5 L1201.4,598.1 L1203.6,601.5 L1205.8,598.1 L1208.0,601.5 L1210.2,598.1 L1212.4,601.5 L1214.6,598.1 L1216.8,601.5 L1219.0,598.1 L1221.2,601.5 L1223.4,598.1 L1225.6,601.5 L1227.8,598.1 L1230.0,601.5 L1232.2,598.1 L1234.4,601.5 L1236.6,598.1 L1238.8,601.5 L1241.0,598.1 L1243.2,601.5 L1245.4,598.1 L1247.6,601.5 L1249.8,598.1 L1252.0,601.5 L1253.9,598.1 M1286.1,601.5 L1288.3,598.1 L1290.5,601.5 L1292.7,598.1 L1294.9,601.5 L1297.1,598.1 L1299.3,601.5 L1301.5,598.1 L1303.7,601.5 L1305.9,598.1 L1308.1,601.5 L1310.3,598.1 L1312.5,601.5 L1314.7,598.1 L1316.9,601.5 L1319.1,598.1 L1320.7,601.5 M1324.8,601.5 L1327.0,598.1 L1329.2,601.5 L1331.4,598.1 L1333.6,601.5 L1335.8,598.1 L1338.0,601.5 L1340.2,598.1 L1340.8,601.5 M1344.9,601.5 L1347.1,598.1 L1349.3,601.5 L1351.5,598.1 L1353.7,601.5 L1355.9,598.1 L1358.1,601.5 L1360.3,598.1 L1362.5,601.5 L1364.7,598.1 L1366.9,601.5 L1369.1,598.1 L1371.3,601.5 L1373.5,598.1 L1375.7,601.5 L1377.9,598.1 L1380.1,601.5 L1382.3,598.1 L1384.5,601.5 L1386.7,598.1 L1388.9,601.5 L1391.1,598.1 L1393.3,601.5 L1395.5,598.1 L1397.7,601.5 L1399.9,598.1 L1402.1,601.5 L1404.3,598.1 L1406.5,601.5 L1408.7,598.1 L1409.1,601.5 M1436.9,601.5 L1439.1,598.1 L1441.3,601.5 L1443.5,598.1 L1445.7,601.5 L1447.9,598.1 L1450.1,601.5 L1452.3,598.1 L1454.5,601.5 L1456.7,598.1 L1458.9,601.5 L1461.1,598.1 L1463.3,601.5 L1465.5,598.1 L1467.7,601.5 L1469.9,598.1 L1472.1,601.5 L1474.3,598.1 L1476.5,601.5 L1478.7,598.1 L1480.9,601.5 L1483.1,598.1 L1484.9,601.5 M1489.0,601.5 L1491.2,598.1 L1493.4,601.5 L1495.6,598.1 L1497.8,601.5 L1500.0,598.1 L1502.2,601.5 L1504.4,598.1 L1506.6,601.5 L1508.8,598.1 L1511.0,601.5 L1513.2,598.1 L1514.6,601.5 M1518.7,601.5 L1520.9,598.1 L1523.1,601.5 L1525.3,598.1 L1527.5,601.5 L1529.7,598.1 L1531.9,601.5 L1534.1,598.1 L1536.3,601.5 L1538.5,598.1 L1540.7,601.5 L1542.9,598.1 L1545.1,601.5 L1546.0,598.1 M903.6,666.1 L905.8,662.7 L908.0,666.1 L910.2,662.7 L912.4,666.1 L914.6,662.7 L916.8,666.1 L919.0,662.7 L921.2,666.1 L923.4,662.7 L925.6,666.1 L927.8,662.7 L930.0,666.1 L932.2,662.7 L934.4,666.1 L936.6,662.7 L938.8,666.1 L941.0,662.7 L943.2,666.1 L945.4,662.7 L947.6,666.1 L949.8,662.7 L951.6,666.1 M972.1,666.1 L974.3,662.7 L976.5,666.1 L978.7,662.7 L980.9,666.1 L983.1,662.7 L985.3,666.1 L987.5,662.7 L988.2,666.1 M992.3,666.1 L994.5,662.7 L996.7,666.1 L998.9,662.7 L1001.1,666.1 L1003.3,662.7 L1005.5,666.1 L1007.7,662.7 L1009.9,666.1 L1012.1,662.7 L1014.3,666.1 L1016.5,662.7 L1018.7,666.1 L1020.9,662.7 L1023.1,666.1 L1025.3,662.7 L1027.5,666.1 L1029.7,662.7 L1031.9,666.1 L1034.1,662.7 L1036.3,666.1 L1038.5,662.7 L1040.7,666.1 L1042.9,662.7 L1045.1,666.1 L1047.3,662.7 L1049.5,666.1 L1051.7,662.7 L1053.1,666.1" fill="none" stroke="#e0141e" stroke-width="1.15"/></svg>
</body></html>
